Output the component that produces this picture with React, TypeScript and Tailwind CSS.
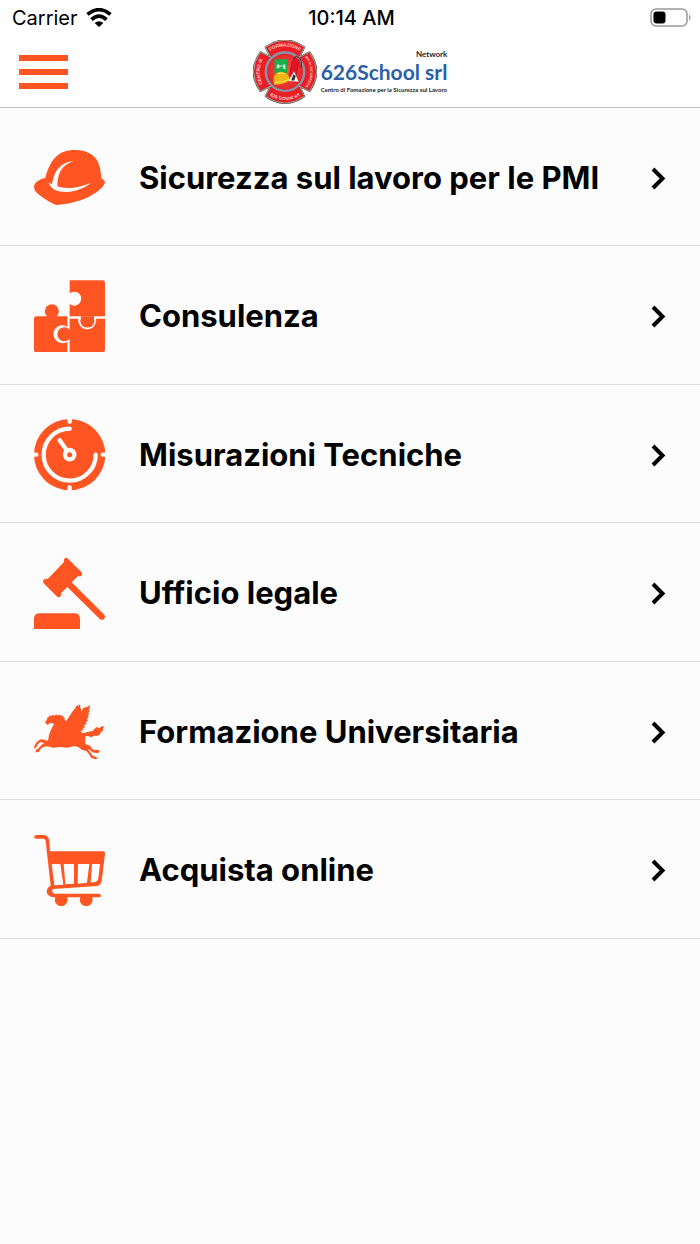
import type { ReactNode } from 'react';

type MenuItem = {
  label: string;
  href: string;
  icon: ReactNode;
};

const HelmetIcon = () => (
  <svg viewBox="42 36 216 216" className="size-18 shrink-0" fill="#ff5522" aria-hidden="true">
    <path d="M76 143C82 118 92 96 108 80C123 65 144 60 167 60C192 60 215 69 228 86C238 99 242 119 244 144C248 148 255 151 255 157C252 168 242 177 229 187C205 204 166 221 110 225C97 222 76 208 57 194C48 188 42 181 42 171C42 160 52 153 63 148Z" />
    <path
      fill="#fcfcfc"
      d="M161 93C134 95 114 110 104 133C100 143 98 153 96 162L86 159C90 168 97 176 107 181C121 187 144 188 165 182C184 177 201 169 214 158C193 167 168 174 144 174C131 174 120 172 112 169C112 153 114 137 122 122C130 108 144 99 161 93Z"
    />
  </svg>
);

const PuzzleIcon = () => (
  <svg viewBox="42 29 216 216" className="size-18 shrink-0" fill="#ff5522" aria-hidden="true">
    <path d="M149 30H248Q255 30 255 38V138H149V101A21 21 0 1 0 149 69Z" />
    <path d="M50 138H81A21 21 0 1 1 110 138H142V169A27 27 0 1 0 142 214V246H50Q42 246 42 238V146Q42 138 50 138Z" />
    <path d="M149 145H175A27 27 0 1 0 228 145H255V238Q255 246 247 246H149V205A21 21 0 1 1 149 178Z" />
    <path d="M182 138H222V146Q224 150 222 157A21 21 0 0 1 182 157Q179 150 183 145Z" />
  </svg>
);

const GaugeIcon = () => (
  <svg viewBox="42 27 216 216" className="size-18 shrink-0" fill="none" aria-hidden="true">
    <circle cx="149" cy="134" r="107" fill="#ff5522" />
    <g stroke="#fcfcfc" strokeWidth="13" strokeLinecap="round">
      <path d="M149 20V35M149 248V232M36 134H49M262 134H248" />
      <path d="M149 56A78 78 0 1 0 227 134" />
      <circle cx="149" cy="134" r="14" />
      <path d="M119 91L140 121" />
    </g>
  </svg>
);

const GavelIcon = () => (
  <svg viewBox="42 21 216 216" className="size-18 shrink-0" fill="#ff5522" aria-hidden="true">
    <path d="M42 237V207Q42 190 59 190H163Q180 190 180 207V237Z" />
    <path d="M132 36Q130 30 133 26Q138 21 144 26L184 66Q189 71 185 76Q181 81 174 78L155 97L253 194Q257 200 253 206Q247 212 240 208L142 111L123 130Q125 136 121 140Q116 144 110 139L71 100Q67 95 71 89Q76 84 83 87Z" />
  </svg>
);

const PegasusIcon = () => (
  <svg viewBox="42 18 216 216" className="size-18 shrink-0" fill="#ff5522" aria-hidden="true">
    <path d="M75 97L82 87L81 83L89 79L87 76L95 78L99 74L104 77L109 73L112 77L118 73L120 77L127 74L126 79L133 79L130 83L136 85L133 89L139 93L147 80L156 67L165 55L172 45L175 48L179 43L181 47L180 57L183 52L183 66L190 54L203 50L210 45L209 56L205 59L210 61L205 69L208 71L203 77L207 81L200 87L204 91L197 98L200 102L192 106L196 111L188 115L190 119L183 122L183 127L190 130L202 126L218 123L229 111L238 115L247 107L248 110L254 109L249 115L249 122L243 126L239 134L230 138L222 137L214 142L207 139L197 138L196 148L196 162L210 167L217 178L225 180L236 180L239 184L235 189L222 188L213 184L208 177L205 180L212 188L218 197L229 201L232 206L226 208L214 204L208 194L200 184L185 179L176 172L163 168L143 173L120 171L100 173L81 169L69 171L61 178L56 186L47 187L47 181L57 173L65 164L73 160L61 156L52 164L50 171L42 176L43 168L50 157L61 148L72 149L84 152L87 135L93 119L102 103L97 99L89 100L82 105Z" />
  </svg>
);

const CartIcon = () => (
  <svg viewBox="42 27 216 216" className="size-18 shrink-0" fill="#ff5522" aria-hidden="true">
    <path d="M49 30H70Q85 30 88 47L90 79H250Q256 80 255 86L245 169Q242 181 231 183L101 192Q95 193 96 198Q97 205 104 206H238Q243 207 243 212Q243 217 237 217H216A19 19 0 1 1 181 217H141A19 19 0 1 1 106 217H101Q83 215 80 201Q80 187 92 182L77 48Q76 41 69 41H49Q42 40 42 36Q42 31 49 30Z" />
    <path
      fill="#fcfcfc"
      d="M95 117H121L130 179L103 181ZM131 117H162V176L136 178ZM174 117H208L201 173L173 176ZM216 117H240L235 160Q233 170 225 171L212 173Z"
    />
  </svg>
);

const MENU_ITEMS: MenuItem[] = [
  { label: 'Sicurezza sul lavoro per le PMI', href: '#sicurezza', icon: <HelmetIcon /> },
  { label: 'Consulenza', href: '#consulenza', icon: <PuzzleIcon /> },
  { label: 'Misurazioni Tecniche', href: '#misurazioni', icon: <GaugeIcon /> },
  { label: 'Ufficio legale', href: '#legale', icon: <GavelIcon /> },
  { label: 'Formazione Universitaria', href: '#formazione', icon: <PegasusIcon /> },
  { label: 'Acquista online', href: '#acquista', icon: <CartIcon /> },
];

// Four lobes split by wedges on the diagonals
const EMBLEM_OUTLINE =
  'M46 33Q104 -8 162 33L147 63L177 48Q218 106 177 164L147 149L162 179Q104 220 46 179L61 149L31 164Q-10 106 31 48L61 63Z';

const Emblem = () => (
  <svg viewBox="9 12 190 190" className="size-16 shrink-0" aria-hidden="true">
    <defs>
      <radialGradient id="disc">
        <stop offset="0" stopColor="#ff5a46" />
        <stop offset="1" stopColor="#e0222a" />
      </radialGradient>
      <path id="arcTop" d="M29 106A75 75 0 0 1 179 106" />
      <path id="arcLeft" d="M104 181A75 75 0 0 1 104 31" />
      <path id="arcRight" d="M104 31A75 75 0 0 1 104 181" />
      <path id="arcBottom" d="M20 106A84 84 0 0 0 188 106" />
    </defs>
    <path d={EMBLEM_OUTLINE} fill="#ee1c25" stroke="#57483f" strokeWidth="5" strokeLinejoin="round" />
    <path d={EMBLEM_OUTLINE} fill="none" stroke="#e8c9c0" strokeWidth="2" strokeLinejoin="round" />
    <circle cx="104" cy="106" r="57" fill="url(#disc)" stroke="#8795a8" strokeWidth="7" />
    <g fill="#fbd5d2" fontFamily="Liberation Sans, sans-serif" fontWeight="700" fontSize="14">
      <text textAnchor="middle">
        <textPath href="#arcTop" startOffset="50%">FORMAZIONE</textPath>
      </text>
      <text textAnchor="middle">
        <textPath href="#arcLeft" startOffset="50%">CENTRO di</textPath>
      </text>
      <text textAnchor="middle" fontSize="11">
        <textPath href="#arcRight" startOffset="50%">per la SICUREZZA</textPath>
      </text>
      <text textAnchor="middle">
        <textPath href="#arcBottom" startOffset="50%">626 School srl</textPath>
      </text>
    </g>
    <path d="M73 69H111V112H73Z" fill="#16b04c" />
    <path d="M80 85H87V96H80ZM99 85H105V98H99ZM87 88H99V91H87Z" fill="#d5f4df" />
    <path d="M132 66L146 71L136 121Q128 128 117 119L124 78Z" fill="#e01424" stroke="#a51420" strokeWidth="2" />
    <path d="M129 67L138 60L146 66M147 66Q156 76 151 95" fill="none" stroke="#6d2228" strokeWidth="3" />
    <path d="M131 103L146 137L112 135Z" fill="#fff" stroke="#c51b22" strokeWidth="2" />
    <path d="M129 114L136 119L132 132L122 132Z" fill="#34343a" />
    <path d="M70 134Q68 111 88 106Q111 105 117 124L116 133Q99 145 72 145Z" fill="#f3b514" />
    <path d="M83 113Q92 107 101 112M72 138Q96 139 116 129" fill="none" stroke="#ffe26b" strokeWidth="3" />
  </svg>
);

function StatusBar() {
  return (
    <div className="grid h-9 grid-cols-3 items-center pr-[9px] pl-3 text-[20px] leading-6 text-black">
      <div className="flex items-center gap-2">
        <span>Carrier</span>
        <svg viewBox="0 0 76 62" className="h-[21px] w-[26px]" aria-hidden="true">
          <g fill="none" stroke="#000" strokeWidth="11">
            <path d="M4 19Q38 -9 72 19" />
            <path d="M16 34Q38 14 60 34" />
          </g>
          <path d="M25 44Q38 34 51 44L38 56Z" />
        </svg>
      </div>
      <span className="text-center font-medium">10:14 AM</span>
      <svg viewBox="0 0 41 20" className="h-5 w-[41px] justify-self-end" aria-hidden="true">
        <rect x="1" y="1" width="36" height="17" rx="5" fill="none" stroke="#999" strokeWidth="1.5" />
        <rect x="3.5" y="3.5" width="12" height="12" rx="3" />
        <path d="M39 6Q42 9.500 39 13Z" fill="#999" />
      </svg>
    </div>
  );
}

function Header() {
  return (
    <header className="border-b border-[#c4c4c4] bg-white">
      <StatusBar />
      <div className="grid h-[71px] grid-cols-[1fr_auto_1fr] items-center">
        <button type="button" aria-label="Menu" className="ml-[19px] flex w-[49px] flex-col gap-2">
          <span className="h-1.5 w-full bg-[#ff5522]" />
          <span className="h-1.5 w-full bg-[#ff5522]" />
          <span className="h-1.5 w-full bg-[#ff5522]" />
        </button>
        <a href="#home" className="flex items-center gap-1 font-['Lato',sans-serif]">
          <Emblem />
          <span className="flex flex-col">
            <span className="self-end text-[8px] leading-2 font-bold text-[#1d1d1f]">Network</span>
            <span className="text-[21px] leading-7 font-bold text-[#2d5fa8]">626School srl</span>
            <span className="text-[6px] leading-2 font-bold whitespace-nowrap text-[#1d1d1f]">
              Centro di Fomazione per la Sicurezza sul Lavoro
            </span>
          </span>
        </a>
      </div>
    </header>
  );
}

export default function App() {
  return (
    <div className="min-h-screen bg-[#fcfcfc] font-['Inter',sans-serif]">
      <Header />
      <nav>
        <ul>
          {MENU_ITEMS.map((item) => (
            <li key={item.label} className="group border-b border-[#dedede]">
              <a
                href={item.href}
                className="flex items-center pt-[34px] pr-[34px] pl-[34px] text-black group-odd:pb-[31px] group-even:pb-8"
              >
                {item.icon}
                <span className="ml-[33px] flex-1 text-[31px] leading-10 font-bold">{item.label}</span>
                <svg viewBox="0 0 16 24" className="h-6 w-4" fill="none" stroke="#000" strokeWidth="4" aria-hidden="true">
                  <path d="M3 3L12.500 12.500L3 22" />
                </svg>
              </a>
            </li>
          ))}
        </ul>
      </nav>
    </div>
  );
}
